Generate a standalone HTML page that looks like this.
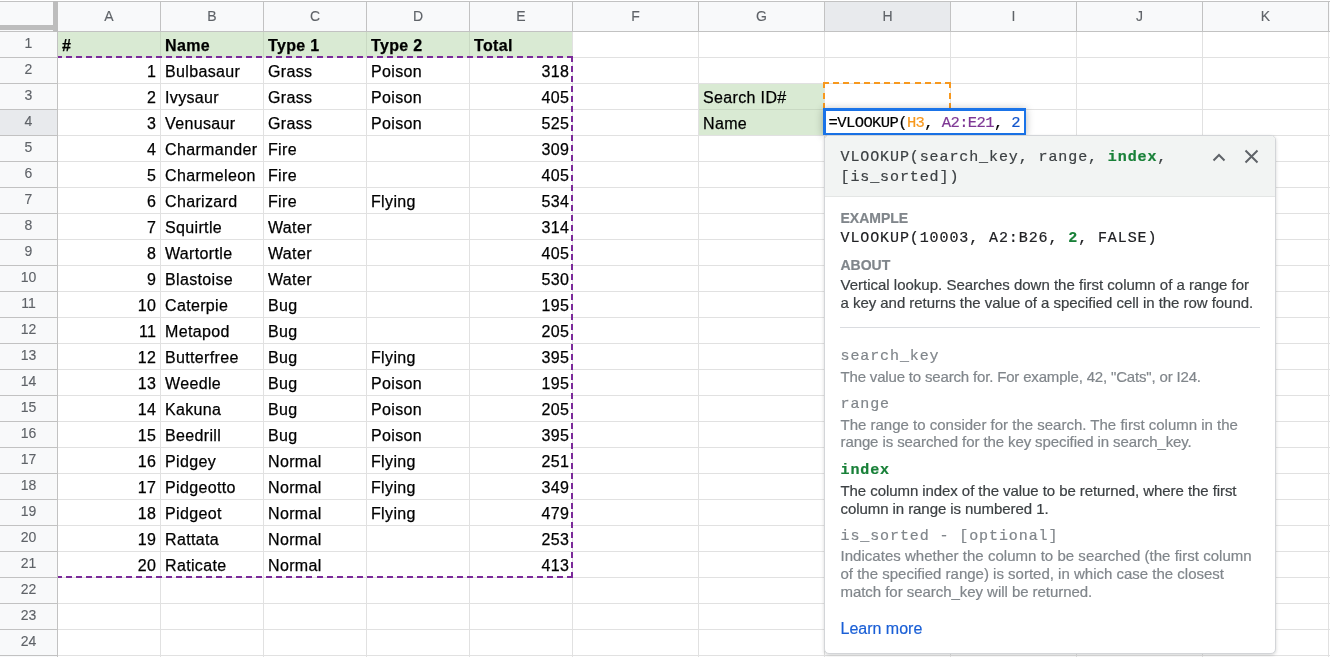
<!DOCTYPE html>
<html><head><meta charset="utf-8"><style>
html,body{margin:0;padding:0;}
body{width:1330px;height:657px;overflow:hidden;position:relative;background:#fff;font-family:'Liberation Sans',sans-serif;}
#g div{position:absolute;}
.t{height:0;line-height:0;white-space:pre;-webkit-text-stroke:0.25px currentColor;}
.b{display:inline-block;height:0;vertical-align:baseline;}
.pop{position:absolute;left:824px;top:135px;width:450px;height:517px;background:#fff;border:1px solid #d3d5d8;border-radius:5px;box-shadow:0 1px 3px rgba(60,64,67,.15),0 2px 5px rgba(60,64,67,.08);overflow:hidden;}
.pop .hd{position:absolute;left:0;top:0;width:450px;height:60px;background:#f2f4f3;border-bottom:1px solid #e4e6e5;}
.pt{position:absolute;height:0;line-height:0;white-space:pre;-webkit-text-stroke:0.2px currentColor;}
#wrap{position:absolute;left:0;top:0;width:1330px;height:657px;will-change:transform;}
.mono{font-family:'Liberation Mono',monospace;}
.sans{font-family:'Liberation Sans',sans-serif;}
</style></head><body><div id="wrap">
<div id="g">
<div style="left:0px;top:2px;width:1330px;height:29px;background:#f8f9fa;"></div>
<div style="left:0px;top:32px;width:57px;height:625px;background:#f8f9fa;"></div>
<div style="left:825px;top:2px;width:125px;height:29px;background:#e8eaed;"></div>
<div style="left:0px;top:110px;width:57px;height:25px;background:#e8eaed;"></div>
<div style="left:58px;top:32px;width:514px;height:25px;background:#d9ead3;"></div>
<div style="left:699px;top:84px;width:125px;height:51px;background:#d9ead3;"></div>
<div style="left:58px;top:57px;width:1272px;height:1px;background:#e1e1e1;"></div>
<div style="left:58px;top:83px;width:1272px;height:1px;background:#e1e1e1;"></div>
<div style="left:58px;top:109px;width:1272px;height:1px;background:#e1e1e1;"></div>
<div style="left:58px;top:135px;width:1272px;height:1px;background:#e1e1e1;"></div>
<div style="left:58px;top:161px;width:1272px;height:1px;background:#e1e1e1;"></div>
<div style="left:58px;top:187px;width:1272px;height:1px;background:#e1e1e1;"></div>
<div style="left:58px;top:213px;width:1272px;height:1px;background:#e1e1e1;"></div>
<div style="left:58px;top:239px;width:1272px;height:1px;background:#e1e1e1;"></div>
<div style="left:58px;top:265px;width:1272px;height:1px;background:#e1e1e1;"></div>
<div style="left:58px;top:291px;width:1272px;height:1px;background:#e1e1e1;"></div>
<div style="left:58px;top:317px;width:1272px;height:1px;background:#e1e1e1;"></div>
<div style="left:58px;top:343px;width:1272px;height:1px;background:#e1e1e1;"></div>
<div style="left:58px;top:369px;width:1272px;height:1px;background:#e1e1e1;"></div>
<div style="left:58px;top:395px;width:1272px;height:1px;background:#e1e1e1;"></div>
<div style="left:58px;top:421px;width:1272px;height:1px;background:#e1e1e1;"></div>
<div style="left:58px;top:447px;width:1272px;height:1px;background:#e1e1e1;"></div>
<div style="left:58px;top:473px;width:1272px;height:1px;background:#e1e1e1;"></div>
<div style="left:58px;top:499px;width:1272px;height:1px;background:#e1e1e1;"></div>
<div style="left:58px;top:525px;width:1272px;height:1px;background:#e1e1e1;"></div>
<div style="left:58px;top:551px;width:1272px;height:1px;background:#e1e1e1;"></div>
<div style="left:58px;top:577px;width:1272px;height:1px;background:#e1e1e1;"></div>
<div style="left:58px;top:603px;width:1272px;height:1px;background:#e1e1e1;"></div>
<div style="left:58px;top:629px;width:1272px;height:1px;background:#e1e1e1;"></div>
<div style="left:58px;top:655px;width:1272px;height:1px;background:#e1e1e1;"></div>
<div style="left:160px;top:32px;width:1px;height:625px;background:#e1e1e1;"></div>
<div style="left:263px;top:32px;width:1px;height:625px;background:#e1e1e1;"></div>
<div style="left:366px;top:32px;width:1px;height:625px;background:#e1e1e1;"></div>
<div style="left:469px;top:32px;width:1px;height:625px;background:#e1e1e1;"></div>
<div style="left:572px;top:32px;width:1px;height:625px;background:#e1e1e1;"></div>
<div style="left:698px;top:32px;width:1px;height:625px;background:#e1e1e1;"></div>
<div style="left:824px;top:32px;width:1px;height:625px;background:#e1e1e1;"></div>
<div style="left:950px;top:32px;width:1px;height:625px;background:#e1e1e1;"></div>
<div style="left:1076px;top:32px;width:1px;height:625px;background:#e1e1e1;"></div>
<div style="left:1202px;top:32px;width:1px;height:625px;background:#e1e1e1;"></div>
<div style="left:1328px;top:32px;width:1px;height:625px;background:#e1e1e1;"></div>
<div style="left:160px;top:32px;width:1px;height:25px;background:#c9d9c3;"></div>
<div style="left:263px;top:32px;width:1px;height:25px;background:#c9d9c3;"></div>
<div style="left:366px;top:32px;width:1px;height:25px;background:#c9d9c3;"></div>
<div style="left:469px;top:32px;width:1px;height:25px;background:#c9d9c3;"></div>
<div style="left:699px;top:109px;width:125px;height:1px;background:#c9d9c3;"></div>
<div style="left:0px;top:1px;width:1330px;height:1px;background:#c2c2c2;"></div>
<div style="left:0px;top:31px;width:1330px;height:1px;background:#c2c2c2;"></div>
<div style="left:57px;top:1px;width:1px;height:656px;background:#c2c2c2;"></div>
<div style="left:160px;top:2px;width:1px;height:29px;background:#c2c2c2;"></div>
<div style="left:263px;top:2px;width:1px;height:29px;background:#c2c2c2;"></div>
<div style="left:366px;top:2px;width:1px;height:29px;background:#c2c2c2;"></div>
<div style="left:469px;top:2px;width:1px;height:29px;background:#c2c2c2;"></div>
<div style="left:572px;top:2px;width:1px;height:29px;background:#c2c2c2;"></div>
<div style="left:698px;top:2px;width:1px;height:29px;background:#c2c2c2;"></div>
<div style="left:824px;top:2px;width:1px;height:29px;background:#c2c2c2;"></div>
<div style="left:950px;top:2px;width:1px;height:29px;background:#c2c2c2;"></div>
<div style="left:1076px;top:2px;width:1px;height:29px;background:#c2c2c2;"></div>
<div style="left:1202px;top:2px;width:1px;height:29px;background:#c2c2c2;"></div>
<div style="left:1328px;top:2px;width:1px;height:29px;background:#c2c2c2;"></div>
<div style="left:0px;top:57px;width:57px;height:1px;background:#c2c2c2;"></div>
<div style="left:0px;top:83px;width:57px;height:1px;background:#c2c2c2;"></div>
<div style="left:0px;top:109px;width:57px;height:1px;background:#c2c2c2;"></div>
<div style="left:0px;top:135px;width:57px;height:1px;background:#c2c2c2;"></div>
<div style="left:0px;top:161px;width:57px;height:1px;background:#c2c2c2;"></div>
<div style="left:0px;top:187px;width:57px;height:1px;background:#c2c2c2;"></div>
<div style="left:0px;top:213px;width:57px;height:1px;background:#c2c2c2;"></div>
<div style="left:0px;top:239px;width:57px;height:1px;background:#c2c2c2;"></div>
<div style="left:0px;top:265px;width:57px;height:1px;background:#c2c2c2;"></div>
<div style="left:0px;top:291px;width:57px;height:1px;background:#c2c2c2;"></div>
<div style="left:0px;top:317px;width:57px;height:1px;background:#c2c2c2;"></div>
<div style="left:0px;top:343px;width:57px;height:1px;background:#c2c2c2;"></div>
<div style="left:0px;top:369px;width:57px;height:1px;background:#c2c2c2;"></div>
<div style="left:0px;top:395px;width:57px;height:1px;background:#c2c2c2;"></div>
<div style="left:0px;top:421px;width:57px;height:1px;background:#c2c2c2;"></div>
<div style="left:0px;top:447px;width:57px;height:1px;background:#c2c2c2;"></div>
<div style="left:0px;top:473px;width:57px;height:1px;background:#c2c2c2;"></div>
<div style="left:0px;top:499px;width:57px;height:1px;background:#c2c2c2;"></div>
<div style="left:0px;top:525px;width:57px;height:1px;background:#c2c2c2;"></div>
<div style="left:0px;top:551px;width:57px;height:1px;background:#c2c2c2;"></div>
<div style="left:0px;top:577px;width:57px;height:1px;background:#c2c2c2;"></div>
<div style="left:0px;top:603px;width:57px;height:1px;background:#c2c2c2;"></div>
<div style="left:0px;top:629px;width:57px;height:1px;background:#c2c2c2;"></div>
<div style="left:0px;top:655px;width:57px;height:1px;background:#c2c2c2;"></div>
<div style="left:53px;top:1px;width:5px;height:31px;background:#bdbdbd;"></div>
<div style="left:0px;top:25px;width:53px;height:5px;background:#bdbdbd;"></div>
<div style="left:0px;top:30px;width:53px;height:1px;background:#f8f9fa;"></div>
<div class="t" style="left:-91.0px;width:400px;text-align:center;top:16.15px;font-family:'Liberation Sans',sans-serif;font-size:14px;color:#5f6368;font-weight:normal;letter-spacing:0px;-webkit-text-stroke:0.12px currentColor;"><span class="b"></span>A</div>
<div class="t" style="left:12.0px;width:400px;text-align:center;top:16.15px;font-family:'Liberation Sans',sans-serif;font-size:14px;color:#5f6368;font-weight:normal;letter-spacing:0px;-webkit-text-stroke:0.12px currentColor;"><span class="b"></span>B</div>
<div class="t" style="left:115.0px;width:400px;text-align:center;top:16.15px;font-family:'Liberation Sans',sans-serif;font-size:14px;color:#5f6368;font-weight:normal;letter-spacing:0px;-webkit-text-stroke:0.12px currentColor;"><span class="b"></span>C</div>
<div class="t" style="left:218.0px;width:400px;text-align:center;top:16.15px;font-family:'Liberation Sans',sans-serif;font-size:14px;color:#5f6368;font-weight:normal;letter-spacing:0px;-webkit-text-stroke:0.12px currentColor;"><span class="b"></span>D</div>
<div class="t" style="left:321.0px;width:400px;text-align:center;top:16.15px;font-family:'Liberation Sans',sans-serif;font-size:14px;color:#5f6368;font-weight:normal;letter-spacing:0px;-webkit-text-stroke:0.12px currentColor;"><span class="b"></span>E</div>
<div class="t" style="left:435.5px;width:400px;text-align:center;top:16.15px;font-family:'Liberation Sans',sans-serif;font-size:14px;color:#5f6368;font-weight:normal;letter-spacing:0px;-webkit-text-stroke:0.12px currentColor;"><span class="b"></span>F</div>
<div class="t" style="left:561.5px;width:400px;text-align:center;top:16.15px;font-family:'Liberation Sans',sans-serif;font-size:14px;color:#5f6368;font-weight:normal;letter-spacing:0px;-webkit-text-stroke:0.12px currentColor;"><span class="b"></span>G</div>
<div class="t" style="left:687.5px;width:400px;text-align:center;top:16.15px;font-family:'Liberation Sans',sans-serif;font-size:14px;color:#5f6368;font-weight:normal;letter-spacing:0px;-webkit-text-stroke:0.12px currentColor;"><span class="b"></span>H</div>
<div class="t" style="left:813.5px;width:400px;text-align:center;top:16.15px;font-family:'Liberation Sans',sans-serif;font-size:14px;color:#5f6368;font-weight:normal;letter-spacing:0px;-webkit-text-stroke:0.12px currentColor;"><span class="b"></span>I</div>
<div class="t" style="left:939.5px;width:400px;text-align:center;top:16.15px;font-family:'Liberation Sans',sans-serif;font-size:14px;color:#5f6368;font-weight:normal;letter-spacing:0px;-webkit-text-stroke:0.12px currentColor;"><span class="b"></span>J</div>
<div class="t" style="left:1065.5px;width:400px;text-align:center;top:16.15px;font-family:'Liberation Sans',sans-serif;font-size:14px;color:#5f6368;font-weight:normal;letter-spacing:0px;-webkit-text-stroke:0.12px currentColor;"><span class="b"></span>K</div>
<div class="t" style="left:-171.5px;width:400px;text-align:center;top:43.25px;font-family:'Liberation Sans',sans-serif;font-size:14px;color:#5f6368;font-weight:normal;letter-spacing:0px;-webkit-text-stroke:0.12px currentColor;"><span class="b"></span>1</div>
<div class="t" style="left:-171.5px;width:400px;text-align:center;top:69.25px;font-family:'Liberation Sans',sans-serif;font-size:14px;color:#5f6368;font-weight:normal;letter-spacing:0px;-webkit-text-stroke:0.12px currentColor;"><span class="b"></span>2</div>
<div class="t" style="left:-171.5px;width:400px;text-align:center;top:95.25px;font-family:'Liberation Sans',sans-serif;font-size:14px;color:#5f6368;font-weight:normal;letter-spacing:0px;-webkit-text-stroke:0.12px currentColor;"><span class="b"></span>3</div>
<div class="t" style="left:-171.5px;width:400px;text-align:center;top:121.25px;font-family:'Liberation Sans',sans-serif;font-size:14px;color:#5f6368;font-weight:normal;letter-spacing:0px;-webkit-text-stroke:0.12px currentColor;"><span class="b"></span>4</div>
<div class="t" style="left:-171.5px;width:400px;text-align:center;top:147.25px;font-family:'Liberation Sans',sans-serif;font-size:14px;color:#5f6368;font-weight:normal;letter-spacing:0px;-webkit-text-stroke:0.12px currentColor;"><span class="b"></span>5</div>
<div class="t" style="left:-171.5px;width:400px;text-align:center;top:173.25px;font-family:'Liberation Sans',sans-serif;font-size:14px;color:#5f6368;font-weight:normal;letter-spacing:0px;-webkit-text-stroke:0.12px currentColor;"><span class="b"></span>6</div>
<div class="t" style="left:-171.5px;width:400px;text-align:center;top:199.25px;font-family:'Liberation Sans',sans-serif;font-size:14px;color:#5f6368;font-weight:normal;letter-spacing:0px;-webkit-text-stroke:0.12px currentColor;"><span class="b"></span>7</div>
<div class="t" style="left:-171.5px;width:400px;text-align:center;top:225.25px;font-family:'Liberation Sans',sans-serif;font-size:14px;color:#5f6368;font-weight:normal;letter-spacing:0px;-webkit-text-stroke:0.12px currentColor;"><span class="b"></span>8</div>
<div class="t" style="left:-171.5px;width:400px;text-align:center;top:251.25px;font-family:'Liberation Sans',sans-serif;font-size:14px;color:#5f6368;font-weight:normal;letter-spacing:0px;-webkit-text-stroke:0.12px currentColor;"><span class="b"></span>9</div>
<div class="t" style="left:-171.5px;width:400px;text-align:center;top:277.25px;font-family:'Liberation Sans',sans-serif;font-size:14px;color:#5f6368;font-weight:normal;letter-spacing:0px;-webkit-text-stroke:0.12px currentColor;"><span class="b"></span>10</div>
<div class="t" style="left:-171.5px;width:400px;text-align:center;top:303.25px;font-family:'Liberation Sans',sans-serif;font-size:14px;color:#5f6368;font-weight:normal;letter-spacing:0px;-webkit-text-stroke:0.12px currentColor;"><span class="b"></span>11</div>
<div class="t" style="left:-171.5px;width:400px;text-align:center;top:329.25px;font-family:'Liberation Sans',sans-serif;font-size:14px;color:#5f6368;font-weight:normal;letter-spacing:0px;-webkit-text-stroke:0.12px currentColor;"><span class="b"></span>12</div>
<div class="t" style="left:-171.5px;width:400px;text-align:center;top:355.25px;font-family:'Liberation Sans',sans-serif;font-size:14px;color:#5f6368;font-weight:normal;letter-spacing:0px;-webkit-text-stroke:0.12px currentColor;"><span class="b"></span>13</div>
<div class="t" style="left:-171.5px;width:400px;text-align:center;top:381.25px;font-family:'Liberation Sans',sans-serif;font-size:14px;color:#5f6368;font-weight:normal;letter-spacing:0px;-webkit-text-stroke:0.12px currentColor;"><span class="b"></span>14</div>
<div class="t" style="left:-171.5px;width:400px;text-align:center;top:407.25px;font-family:'Liberation Sans',sans-serif;font-size:14px;color:#5f6368;font-weight:normal;letter-spacing:0px;-webkit-text-stroke:0.12px currentColor;"><span class="b"></span>15</div>
<div class="t" style="left:-171.5px;width:400px;text-align:center;top:433.25px;font-family:'Liberation Sans',sans-serif;font-size:14px;color:#5f6368;font-weight:normal;letter-spacing:0px;-webkit-text-stroke:0.12px currentColor;"><span class="b"></span>16</div>
<div class="t" style="left:-171.5px;width:400px;text-align:center;top:459.25px;font-family:'Liberation Sans',sans-serif;font-size:14px;color:#5f6368;font-weight:normal;letter-spacing:0px;-webkit-text-stroke:0.12px currentColor;"><span class="b"></span>17</div>
<div class="t" style="left:-171.5px;width:400px;text-align:center;top:485.25px;font-family:'Liberation Sans',sans-serif;font-size:14px;color:#5f6368;font-weight:normal;letter-spacing:0px;-webkit-text-stroke:0.12px currentColor;"><span class="b"></span>18</div>
<div class="t" style="left:-171.5px;width:400px;text-align:center;top:511.25px;font-family:'Liberation Sans',sans-serif;font-size:14px;color:#5f6368;font-weight:normal;letter-spacing:0px;-webkit-text-stroke:0.12px currentColor;"><span class="b"></span>19</div>
<div class="t" style="left:-171.5px;width:400px;text-align:center;top:537.25px;font-family:'Liberation Sans',sans-serif;font-size:14px;color:#5f6368;font-weight:normal;letter-spacing:0px;-webkit-text-stroke:0.12px currentColor;"><span class="b"></span>20</div>
<div class="t" style="left:-171.5px;width:400px;text-align:center;top:563.25px;font-family:'Liberation Sans',sans-serif;font-size:14px;color:#5f6368;font-weight:normal;letter-spacing:0px;-webkit-text-stroke:0.12px currentColor;"><span class="b"></span>21</div>
<div class="t" style="left:-171.5px;width:400px;text-align:center;top:589.25px;font-family:'Liberation Sans',sans-serif;font-size:14px;color:#5f6368;font-weight:normal;letter-spacing:0px;-webkit-text-stroke:0.12px currentColor;"><span class="b"></span>22</div>
<div class="t" style="left:-171.5px;width:400px;text-align:center;top:615.25px;font-family:'Liberation Sans',sans-serif;font-size:14px;color:#5f6368;font-weight:normal;letter-spacing:0px;-webkit-text-stroke:0.12px currentColor;"><span class="b"></span>23</div>
<div class="t" style="left:-171.5px;width:400px;text-align:center;top:641.25px;font-family:'Liberation Sans',sans-serif;font-size:14px;color:#5f6368;font-weight:normal;letter-spacing:0px;-webkit-text-stroke:0.12px currentColor;"><span class="b"></span>24</div>
<div class="t" style="left:62px;top:45.75px;font-family:'Liberation Sans',sans-serif;font-size:16px;color:#000;font-weight:bold;letter-spacing:0.35px;"><span class="b"></span>#</div>
<div class="t" style="left:165px;top:45.75px;font-family:'Liberation Sans',sans-serif;font-size:16px;color:#000;font-weight:bold;letter-spacing:0.35px;"><span class="b"></span>Name</div>
<div class="t" style="left:268px;top:45.75px;font-family:'Liberation Sans',sans-serif;font-size:16px;color:#000;font-weight:bold;letter-spacing:0.35px;"><span class="b"></span>Type 1</div>
<div class="t" style="left:371px;top:45.75px;font-family:'Liberation Sans',sans-serif;font-size:16px;color:#000;font-weight:bold;letter-spacing:0.35px;"><span class="b"></span>Type 2</div>
<div class="t" style="left:474px;top:45.75px;font-family:'Liberation Sans',sans-serif;font-size:16px;color:#000;font-weight:bold;letter-spacing:0.35px;"><span class="b"></span>Total</div>
<div class="t" style="right:1173.65px;top:71.95px;font-family:'Liberation Sans',sans-serif;font-size:16px;color:#000;font-weight:normal;letter-spacing:0.35px;"><span class="b"></span>1</div>
<div class="t" style="left:165px;top:71.95px;font-family:'Liberation Sans',sans-serif;font-size:16px;color:#000;font-weight:normal;letter-spacing:0.35px;"><span class="b"></span>Bulbasaur</div>
<div class="t" style="left:268px;top:71.95px;font-family:'Liberation Sans',sans-serif;font-size:16px;color:#000;font-weight:normal;letter-spacing:0.35px;"><span class="b"></span>Grass</div>
<div class="t" style="left:371px;top:71.95px;font-family:'Liberation Sans',sans-serif;font-size:16px;color:#000;font-weight:normal;letter-spacing:0.35px;"><span class="b"></span>Poison</div>
<div class="t" style="right:760.65px;top:71.95px;font-family:'Liberation Sans',sans-serif;font-size:16px;color:#000;font-weight:normal;letter-spacing:0.35px;"><span class="b"></span>318</div>
<div class="t" style="right:1173.65px;top:97.95px;font-family:'Liberation Sans',sans-serif;font-size:16px;color:#000;font-weight:normal;letter-spacing:0.35px;"><span class="b"></span>2</div>
<div class="t" style="left:165px;top:97.95px;font-family:'Liberation Sans',sans-serif;font-size:16px;color:#000;font-weight:normal;letter-spacing:0.35px;"><span class="b"></span>Ivysaur</div>
<div class="t" style="left:268px;top:97.95px;font-family:'Liberation Sans',sans-serif;font-size:16px;color:#000;font-weight:normal;letter-spacing:0.35px;"><span class="b"></span>Grass</div>
<div class="t" style="left:371px;top:97.95px;font-family:'Liberation Sans',sans-serif;font-size:16px;color:#000;font-weight:normal;letter-spacing:0.35px;"><span class="b"></span>Poison</div>
<div class="t" style="right:760.65px;top:97.95px;font-family:'Liberation Sans',sans-serif;font-size:16px;color:#000;font-weight:normal;letter-spacing:0.35px;"><span class="b"></span>405</div>
<div class="t" style="right:1173.65px;top:123.95px;font-family:'Liberation Sans',sans-serif;font-size:16px;color:#000;font-weight:normal;letter-spacing:0.35px;"><span class="b"></span>3</div>
<div class="t" style="left:165px;top:123.95px;font-family:'Liberation Sans',sans-serif;font-size:16px;color:#000;font-weight:normal;letter-spacing:0.35px;"><span class="b"></span>Venusaur</div>
<div class="t" style="left:268px;top:123.95px;font-family:'Liberation Sans',sans-serif;font-size:16px;color:#000;font-weight:normal;letter-spacing:0.35px;"><span class="b"></span>Grass</div>
<div class="t" style="left:371px;top:123.95px;font-family:'Liberation Sans',sans-serif;font-size:16px;color:#000;font-weight:normal;letter-spacing:0.35px;"><span class="b"></span>Poison</div>
<div class="t" style="right:760.65px;top:123.95px;font-family:'Liberation Sans',sans-serif;font-size:16px;color:#000;font-weight:normal;letter-spacing:0.35px;"><span class="b"></span>525</div>
<div class="t" style="right:1173.65px;top:149.95px;font-family:'Liberation Sans',sans-serif;font-size:16px;color:#000;font-weight:normal;letter-spacing:0.35px;"><span class="b"></span>4</div>
<div class="t" style="left:165px;top:149.95px;font-family:'Liberation Sans',sans-serif;font-size:16px;color:#000;font-weight:normal;letter-spacing:0.35px;"><span class="b"></span>Charmander</div>
<div class="t" style="left:268px;top:149.95px;font-family:'Liberation Sans',sans-serif;font-size:16px;color:#000;font-weight:normal;letter-spacing:0.35px;"><span class="b"></span>Fire</div>
<div class="t" style="right:760.65px;top:149.95px;font-family:'Liberation Sans',sans-serif;font-size:16px;color:#000;font-weight:normal;letter-spacing:0.35px;"><span class="b"></span>309</div>
<div class="t" style="right:1173.65px;top:175.95px;font-family:'Liberation Sans',sans-serif;font-size:16px;color:#000;font-weight:normal;letter-spacing:0.35px;"><span class="b"></span>5</div>
<div class="t" style="left:165px;top:175.95px;font-family:'Liberation Sans',sans-serif;font-size:16px;color:#000;font-weight:normal;letter-spacing:0.35px;"><span class="b"></span>Charmeleon</div>
<div class="t" style="left:268px;top:175.95px;font-family:'Liberation Sans',sans-serif;font-size:16px;color:#000;font-weight:normal;letter-spacing:0.35px;"><span class="b"></span>Fire</div>
<div class="t" style="right:760.65px;top:175.95px;font-family:'Liberation Sans',sans-serif;font-size:16px;color:#000;font-weight:normal;letter-spacing:0.35px;"><span class="b"></span>405</div>
<div class="t" style="right:1173.65px;top:201.95px;font-family:'Liberation Sans',sans-serif;font-size:16px;color:#000;font-weight:normal;letter-spacing:0.35px;"><span class="b"></span>6</div>
<div class="t" style="left:165px;top:201.95px;font-family:'Liberation Sans',sans-serif;font-size:16px;color:#000;font-weight:normal;letter-spacing:0.35px;"><span class="b"></span>Charizard</div>
<div class="t" style="left:268px;top:201.95px;font-family:'Liberation Sans',sans-serif;font-size:16px;color:#000;font-weight:normal;letter-spacing:0.35px;"><span class="b"></span>Fire</div>
<div class="t" style="left:371px;top:201.95px;font-family:'Liberation Sans',sans-serif;font-size:16px;color:#000;font-weight:normal;letter-spacing:0.35px;"><span class="b"></span>Flying</div>
<div class="t" style="right:760.65px;top:201.95px;font-family:'Liberation Sans',sans-serif;font-size:16px;color:#000;font-weight:normal;letter-spacing:0.35px;"><span class="b"></span>534</div>
<div class="t" style="right:1173.65px;top:227.95px;font-family:'Liberation Sans',sans-serif;font-size:16px;color:#000;font-weight:normal;letter-spacing:0.35px;"><span class="b"></span>7</div>
<div class="t" style="left:165px;top:227.95px;font-family:'Liberation Sans',sans-serif;font-size:16px;color:#000;font-weight:normal;letter-spacing:0.35px;"><span class="b"></span>Squirtle</div>
<div class="t" style="left:268px;top:227.95px;font-family:'Liberation Sans',sans-serif;font-size:16px;color:#000;font-weight:normal;letter-spacing:0.35px;"><span class="b"></span>Water</div>
<div class="t" style="right:760.65px;top:227.95px;font-family:'Liberation Sans',sans-serif;font-size:16px;color:#000;font-weight:normal;letter-spacing:0.35px;"><span class="b"></span>314</div>
<div class="t" style="right:1173.65px;top:253.95px;font-family:'Liberation Sans',sans-serif;font-size:16px;color:#000;font-weight:normal;letter-spacing:0.35px;"><span class="b"></span>8</div>
<div class="t" style="left:165px;top:253.95px;font-family:'Liberation Sans',sans-serif;font-size:16px;color:#000;font-weight:normal;letter-spacing:0.35px;"><span class="b"></span>Wartortle</div>
<div class="t" style="left:268px;top:253.95px;font-family:'Liberation Sans',sans-serif;font-size:16px;color:#000;font-weight:normal;letter-spacing:0.35px;"><span class="b"></span>Water</div>
<div class="t" style="right:760.65px;top:253.95px;font-family:'Liberation Sans',sans-serif;font-size:16px;color:#000;font-weight:normal;letter-spacing:0.35px;"><span class="b"></span>405</div>
<div class="t" style="right:1173.65px;top:279.95px;font-family:'Liberation Sans',sans-serif;font-size:16px;color:#000;font-weight:normal;letter-spacing:0.35px;"><span class="b"></span>9</div>
<div class="t" style="left:165px;top:279.95px;font-family:'Liberation Sans',sans-serif;font-size:16px;color:#000;font-weight:normal;letter-spacing:0.35px;"><span class="b"></span>Blastoise</div>
<div class="t" style="left:268px;top:279.95px;font-family:'Liberation Sans',sans-serif;font-size:16px;color:#000;font-weight:normal;letter-spacing:0.35px;"><span class="b"></span>Water</div>
<div class="t" style="right:760.65px;top:279.95px;font-family:'Liberation Sans',sans-serif;font-size:16px;color:#000;font-weight:normal;letter-spacing:0.35px;"><span class="b"></span>530</div>
<div class="t" style="right:1173.65px;top:305.95px;font-family:'Liberation Sans',sans-serif;font-size:16px;color:#000;font-weight:normal;letter-spacing:0.35px;"><span class="b"></span>10</div>
<div class="t" style="left:165px;top:305.95px;font-family:'Liberation Sans',sans-serif;font-size:16px;color:#000;font-weight:normal;letter-spacing:0.35px;"><span class="b"></span>Caterpie</div>
<div class="t" style="left:268px;top:305.95px;font-family:'Liberation Sans',sans-serif;font-size:16px;color:#000;font-weight:normal;letter-spacing:0.35px;"><span class="b"></span>Bug</div>
<div class="t" style="right:760.65px;top:305.95px;font-family:'Liberation Sans',sans-serif;font-size:16px;color:#000;font-weight:normal;letter-spacing:0.35px;"><span class="b"></span>195</div>
<div class="t" style="right:1173.65px;top:331.95px;font-family:'Liberation Sans',sans-serif;font-size:16px;color:#000;font-weight:normal;letter-spacing:0.35px;"><span class="b"></span>11</div>
<div class="t" style="left:165px;top:331.95px;font-family:'Liberation Sans',sans-serif;font-size:16px;color:#000;font-weight:normal;letter-spacing:0.35px;"><span class="b"></span>Metapod</div>
<div class="t" style="left:268px;top:331.95px;font-family:'Liberation Sans',sans-serif;font-size:16px;color:#000;font-weight:normal;letter-spacing:0.35px;"><span class="b"></span>Bug</div>
<div class="t" style="right:760.65px;top:331.95px;font-family:'Liberation Sans',sans-serif;font-size:16px;color:#000;font-weight:normal;letter-spacing:0.35px;"><span class="b"></span>205</div>
<div class="t" style="right:1173.65px;top:357.95px;font-family:'Liberation Sans',sans-serif;font-size:16px;color:#000;font-weight:normal;letter-spacing:0.35px;"><span class="b"></span>12</div>
<div class="t" style="left:165px;top:357.95px;font-family:'Liberation Sans',sans-serif;font-size:16px;color:#000;font-weight:normal;letter-spacing:0.35px;"><span class="b"></span>Butterfree</div>
<div class="t" style="left:268px;top:357.95px;font-family:'Liberation Sans',sans-serif;font-size:16px;color:#000;font-weight:normal;letter-spacing:0.35px;"><span class="b"></span>Bug</div>
<div class="t" style="left:371px;top:357.95px;font-family:'Liberation Sans',sans-serif;font-size:16px;color:#000;font-weight:normal;letter-spacing:0.35px;"><span class="b"></span>Flying</div>
<div class="t" style="right:760.65px;top:357.95px;font-family:'Liberation Sans',sans-serif;font-size:16px;color:#000;font-weight:normal;letter-spacing:0.35px;"><span class="b"></span>395</div>
<div class="t" style="right:1173.65px;top:383.95px;font-family:'Liberation Sans',sans-serif;font-size:16px;color:#000;font-weight:normal;letter-spacing:0.35px;"><span class="b"></span>13</div>
<div class="t" style="left:165px;top:383.95px;font-family:'Liberation Sans',sans-serif;font-size:16px;color:#000;font-weight:normal;letter-spacing:0.35px;"><span class="b"></span>Weedle</div>
<div class="t" style="left:268px;top:383.95px;font-family:'Liberation Sans',sans-serif;font-size:16px;color:#000;font-weight:normal;letter-spacing:0.35px;"><span class="b"></span>Bug</div>
<div class="t" style="left:371px;top:383.95px;font-family:'Liberation Sans',sans-serif;font-size:16px;color:#000;font-weight:normal;letter-spacing:0.35px;"><span class="b"></span>Poison</div>
<div class="t" style="right:760.65px;top:383.95px;font-family:'Liberation Sans',sans-serif;font-size:16px;color:#000;font-weight:normal;letter-spacing:0.35px;"><span class="b"></span>195</div>
<div class="t" style="right:1173.65px;top:409.95px;font-family:'Liberation Sans',sans-serif;font-size:16px;color:#000;font-weight:normal;letter-spacing:0.35px;"><span class="b"></span>14</div>
<div class="t" style="left:165px;top:409.95px;font-family:'Liberation Sans',sans-serif;font-size:16px;color:#000;font-weight:normal;letter-spacing:0.35px;"><span class="b"></span>Kakuna</div>
<div class="t" style="left:268px;top:409.95px;font-family:'Liberation Sans',sans-serif;font-size:16px;color:#000;font-weight:normal;letter-spacing:0.35px;"><span class="b"></span>Bug</div>
<div class="t" style="left:371px;top:409.95px;font-family:'Liberation Sans',sans-serif;font-size:16px;color:#000;font-weight:normal;letter-spacing:0.35px;"><span class="b"></span>Poison</div>
<div class="t" style="right:760.65px;top:409.95px;font-family:'Liberation Sans',sans-serif;font-size:16px;color:#000;font-weight:normal;letter-spacing:0.35px;"><span class="b"></span>205</div>
<div class="t" style="right:1173.65px;top:435.95px;font-family:'Liberation Sans',sans-serif;font-size:16px;color:#000;font-weight:normal;letter-spacing:0.35px;"><span class="b"></span>15</div>
<div class="t" style="left:165px;top:435.95px;font-family:'Liberation Sans',sans-serif;font-size:16px;color:#000;font-weight:normal;letter-spacing:0.35px;"><span class="b"></span>Beedrill</div>
<div class="t" style="left:268px;top:435.95px;font-family:'Liberation Sans',sans-serif;font-size:16px;color:#000;font-weight:normal;letter-spacing:0.35px;"><span class="b"></span>Bug</div>
<div class="t" style="left:371px;top:435.95px;font-family:'Liberation Sans',sans-serif;font-size:16px;color:#000;font-weight:normal;letter-spacing:0.35px;"><span class="b"></span>Poison</div>
<div class="t" style="right:760.65px;top:435.95px;font-family:'Liberation Sans',sans-serif;font-size:16px;color:#000;font-weight:normal;letter-spacing:0.35px;"><span class="b"></span>395</div>
<div class="t" style="right:1173.65px;top:461.95px;font-family:'Liberation Sans',sans-serif;font-size:16px;color:#000;font-weight:normal;letter-spacing:0.35px;"><span class="b"></span>16</div>
<div class="t" style="left:165px;top:461.95px;font-family:'Liberation Sans',sans-serif;font-size:16px;color:#000;font-weight:normal;letter-spacing:0.35px;"><span class="b"></span>Pidgey</div>
<div class="t" style="left:268px;top:461.95px;font-family:'Liberation Sans',sans-serif;font-size:16px;color:#000;font-weight:normal;letter-spacing:0.35px;"><span class="b"></span>Normal</div>
<div class="t" style="left:371px;top:461.95px;font-family:'Liberation Sans',sans-serif;font-size:16px;color:#000;font-weight:normal;letter-spacing:0.35px;"><span class="b"></span>Flying</div>
<div class="t" style="right:760.65px;top:461.95px;font-family:'Liberation Sans',sans-serif;font-size:16px;color:#000;font-weight:normal;letter-spacing:0.35px;"><span class="b"></span>251</div>
<div class="t" style="right:1173.65px;top:487.95px;font-family:'Liberation Sans',sans-serif;font-size:16px;color:#000;font-weight:normal;letter-spacing:0.35px;"><span class="b"></span>17</div>
<div class="t" style="left:165px;top:487.95px;font-family:'Liberation Sans',sans-serif;font-size:16px;color:#000;font-weight:normal;letter-spacing:0.35px;"><span class="b"></span>Pidgeotto</div>
<div class="t" style="left:268px;top:487.95px;font-family:'Liberation Sans',sans-serif;font-size:16px;color:#000;font-weight:normal;letter-spacing:0.35px;"><span class="b"></span>Normal</div>
<div class="t" style="left:371px;top:487.95px;font-family:'Liberation Sans',sans-serif;font-size:16px;color:#000;font-weight:normal;letter-spacing:0.35px;"><span class="b"></span>Flying</div>
<div class="t" style="right:760.65px;top:487.95px;font-family:'Liberation Sans',sans-serif;font-size:16px;color:#000;font-weight:normal;letter-spacing:0.35px;"><span class="b"></span>349</div>
<div class="t" style="right:1173.65px;top:513.95px;font-family:'Liberation Sans',sans-serif;font-size:16px;color:#000;font-weight:normal;letter-spacing:0.35px;"><span class="b"></span>18</div>
<div class="t" style="left:165px;top:513.95px;font-family:'Liberation Sans',sans-serif;font-size:16px;color:#000;font-weight:normal;letter-spacing:0.35px;"><span class="b"></span>Pidgeot</div>
<div class="t" style="left:268px;top:513.95px;font-family:'Liberation Sans',sans-serif;font-size:16px;color:#000;font-weight:normal;letter-spacing:0.35px;"><span class="b"></span>Normal</div>
<div class="t" style="left:371px;top:513.95px;font-family:'Liberation Sans',sans-serif;font-size:16px;color:#000;font-weight:normal;letter-spacing:0.35px;"><span class="b"></span>Flying</div>
<div class="t" style="right:760.65px;top:513.95px;font-family:'Liberation Sans',sans-serif;font-size:16px;color:#000;font-weight:normal;letter-spacing:0.35px;"><span class="b"></span>479</div>
<div class="t" style="right:1173.65px;top:539.95px;font-family:'Liberation Sans',sans-serif;font-size:16px;color:#000;font-weight:normal;letter-spacing:0.35px;"><span class="b"></span>19</div>
<div class="t" style="left:165px;top:539.95px;font-family:'Liberation Sans',sans-serif;font-size:16px;color:#000;font-weight:normal;letter-spacing:0.35px;"><span class="b"></span>Rattata</div>
<div class="t" style="left:268px;top:539.95px;font-family:'Liberation Sans',sans-serif;font-size:16px;color:#000;font-weight:normal;letter-spacing:0.35px;"><span class="b"></span>Normal</div>
<div class="t" style="right:760.65px;top:539.95px;font-family:'Liberation Sans',sans-serif;font-size:16px;color:#000;font-weight:normal;letter-spacing:0.35px;"><span class="b"></span>253</div>
<div class="t" style="right:1173.65px;top:565.95px;font-family:'Liberation Sans',sans-serif;font-size:16px;color:#000;font-weight:normal;letter-spacing:0.35px;"><span class="b"></span>20</div>
<div class="t" style="left:165px;top:565.95px;font-family:'Liberation Sans',sans-serif;font-size:16px;color:#000;font-weight:normal;letter-spacing:0.35px;"><span class="b"></span>Raticate</div>
<div class="t" style="left:268px;top:565.95px;font-family:'Liberation Sans',sans-serif;font-size:16px;color:#000;font-weight:normal;letter-spacing:0.35px;"><span class="b"></span>Normal</div>
<div class="t" style="right:760.65px;top:565.95px;font-family:'Liberation Sans',sans-serif;font-size:16px;color:#000;font-weight:normal;letter-spacing:0.35px;"><span class="b"></span>413</div>
<div class="t" style="left:703px;top:97.95px;font-family:'Liberation Sans',sans-serif;font-size:16px;color:#000;font-weight:normal;letter-spacing:0.35px;"><span class="b"></span>Search ID#</div>
<div class="t" style="left:703px;top:123.95px;font-family:'Liberation Sans',sans-serif;font-size:16px;color:#000;font-weight:normal;letter-spacing:0.35px;"><span class="b"></span>Name</div>
</div>
<svg style="position:absolute;left:0;top:0" width="1330" height="657" shape-rendering="crispEdges"><clipPath id="cp"><rect x="58" y="0" width="1300" height="657"/></clipPath><g clip-path="url(#cp)"><rect x="56.00" y="56" width="6" height="2" fill="#7b2a9a"/><rect x="66.02" y="56" width="6" height="2" fill="#7b2a9a"/><rect x="76.04" y="56" width="6" height="2" fill="#7b2a9a"/><rect x="86.06" y="56" width="6" height="2" fill="#7b2a9a"/><rect x="96.08" y="56" width="6" height="2" fill="#7b2a9a"/><rect x="106.10" y="56" width="6" height="2" fill="#7b2a9a"/><rect x="116.12" y="56" width="6" height="2" fill="#7b2a9a"/><rect x="126.14" y="56" width="6" height="2" fill="#7b2a9a"/><rect x="136.16" y="56" width="6" height="2" fill="#7b2a9a"/><rect x="146.18" y="56" width="6" height="2" fill="#7b2a9a"/><rect x="156.20" y="56" width="6" height="2" fill="#7b2a9a"/><rect x="166.22" y="56" width="6" height="2" fill="#7b2a9a"/><rect x="176.24" y="56" width="6" height="2" fill="#7b2a9a"/><rect x="186.25" y="56" width="6" height="2" fill="#7b2a9a"/><rect x="196.27" y="56" width="6" height="2" fill="#7b2a9a"/><rect x="206.29" y="56" width="6" height="2" fill="#7b2a9a"/><rect x="216.31" y="56" width="6" height="2" fill="#7b2a9a"/><rect x="226.33" y="56" width="6" height="2" fill="#7b2a9a"/><rect x="236.35" y="56" width="6" height="2" fill="#7b2a9a"/><rect x="246.37" y="56" width="6" height="2" fill="#7b2a9a"/><rect x="256.39" y="56" width="6" height="2" fill="#7b2a9a"/><rect x="266.41" y="56" width="6" height="2" fill="#7b2a9a"/><rect x="276.43" y="56" width="6" height="2" fill="#7b2a9a"/><rect x="286.45" y="56" width="6" height="2" fill="#7b2a9a"/><rect x="296.47" y="56" width="6" height="2" fill="#7b2a9a"/><rect x="306.49" y="56" width="6" height="2" fill="#7b2a9a"/><rect x="316.51" y="56" width="6" height="2" fill="#7b2a9a"/><rect x="326.53" y="56" width="6" height="2" fill="#7b2a9a"/><rect x="336.55" y="56" width="6" height="2" fill="#7b2a9a"/><rect x="346.57" y="56" width="6" height="2" fill="#7b2a9a"/><rect x="356.59" y="56" width="6" height="2" fill="#7b2a9a"/><rect x="366.61" y="56" width="6" height="2" fill="#7b2a9a"/><rect x="376.63" y="56" width="6" height="2" fill="#7b2a9a"/><rect x="386.65" y="56" width="6" height="2" fill="#7b2a9a"/><rect x="396.67" y="56" width="6" height="2" fill="#7b2a9a"/><rect x="406.69" y="56" width="6" height="2" fill="#7b2a9a"/><rect x="416.71" y="56" width="6" height="2" fill="#7b2a9a"/><rect x="426.73" y="56" width="6" height="2" fill="#7b2a9a"/><rect x="436.75" y="56" width="6" height="2" fill="#7b2a9a"/><rect x="446.76" y="56" width="6" height="2" fill="#7b2a9a"/><rect x="456.78" y="56" width="6" height="2" fill="#7b2a9a"/><rect x="466.80" y="56" width="6" height="2" fill="#7b2a9a"/><rect x="476.82" y="56" width="6" height="2" fill="#7b2a9a"/><rect x="486.84" y="56" width="6" height="2" fill="#7b2a9a"/><rect x="496.86" y="56" width="6" height="2" fill="#7b2a9a"/><rect x="506.88" y="56" width="6" height="2" fill="#7b2a9a"/><rect x="516.90" y="56" width="6" height="2" fill="#7b2a9a"/><rect x="526.92" y="56" width="6" height="2" fill="#7b2a9a"/><rect x="536.94" y="56" width="6" height="2" fill="#7b2a9a"/><rect x="546.96" y="56" width="6" height="2" fill="#7b2a9a"/><rect x="556.98" y="56" width="6" height="2" fill="#7b2a9a"/><rect x="567.00" y="56" width="6" height="2" fill="#7b2a9a"/><rect x="56.00" y="576" width="6" height="2" fill="#7b2a9a"/><rect x="66.02" y="576" width="6" height="2" fill="#7b2a9a"/><rect x="76.04" y="576" width="6" height="2" fill="#7b2a9a"/><rect x="86.06" y="576" width="6" height="2" fill="#7b2a9a"/><rect x="96.08" y="576" width="6" height="2" fill="#7b2a9a"/><rect x="106.10" y="576" width="6" height="2" fill="#7b2a9a"/><rect x="116.12" y="576" width="6" height="2" fill="#7b2a9a"/><rect x="126.14" y="576" width="6" height="2" fill="#7b2a9a"/><rect x="136.16" y="576" width="6" height="2" fill="#7b2a9a"/><rect x="146.18" y="576" width="6" height="2" fill="#7b2a9a"/><rect x="156.20" y="576" width="6" height="2" fill="#7b2a9a"/><rect x="166.22" y="576" width="6" height="2" fill="#7b2a9a"/><rect x="176.24" y="576" width="6" height="2" fill="#7b2a9a"/><rect x="186.25" y="576" width="6" height="2" fill="#7b2a9a"/><rect x="196.27" y="576" width="6" height="2" fill="#7b2a9a"/><rect x="206.29" y="576" width="6" height="2" fill="#7b2a9a"/><rect x="216.31" y="576" width="6" height="2" fill="#7b2a9a"/><rect x="226.33" y="576" width="6" height="2" fill="#7b2a9a"/><rect x="236.35" y="576" width="6" height="2" fill="#7b2a9a"/><rect x="246.37" y="576" width="6" height="2" fill="#7b2a9a"/><rect x="256.39" y="576" width="6" height="2" fill="#7b2a9a"/><rect x="266.41" y="576" width="6" height="2" fill="#7b2a9a"/><rect x="276.43" y="576" width="6" height="2" fill="#7b2a9a"/><rect x="286.45" y="576" width="6" height="2" fill="#7b2a9a"/><rect x="296.47" y="576" width="6" height="2" fill="#7b2a9a"/><rect x="306.49" y="576" width="6" height="2" fill="#7b2a9a"/><rect x="316.51" y="576" width="6" height="2" fill="#7b2a9a"/><rect x="326.53" y="576" width="6" height="2" fill="#7b2a9a"/><rect x="336.55" y="576" width="6" height="2" fill="#7b2a9a"/><rect x="346.57" y="576" width="6" height="2" fill="#7b2a9a"/><rect x="356.59" y="576" width="6" height="2" fill="#7b2a9a"/><rect x="366.61" y="576" width="6" height="2" fill="#7b2a9a"/><rect x="376.63" y="576" width="6" height="2" fill="#7b2a9a"/><rect x="386.65" y="576" width="6" height="2" fill="#7b2a9a"/><rect x="396.67" y="576" width="6" height="2" fill="#7b2a9a"/><rect x="406.69" y="576" width="6" height="2" fill="#7b2a9a"/><rect x="416.71" y="576" width="6" height="2" fill="#7b2a9a"/><rect x="426.73" y="576" width="6" height="2" fill="#7b2a9a"/><rect x="436.75" y="576" width="6" height="2" fill="#7b2a9a"/><rect x="446.76" y="576" width="6" height="2" fill="#7b2a9a"/><rect x="456.78" y="576" width="6" height="2" fill="#7b2a9a"/><rect x="466.80" y="576" width="6" height="2" fill="#7b2a9a"/><rect x="476.82" y="576" width="6" height="2" fill="#7b2a9a"/><rect x="486.84" y="576" width="6" height="2" fill="#7b2a9a"/><rect x="496.86" y="576" width="6" height="2" fill="#7b2a9a"/><rect x="506.88" y="576" width="6" height="2" fill="#7b2a9a"/><rect x="516.90" y="576" width="6" height="2" fill="#7b2a9a"/><rect x="526.92" y="576" width="6" height="2" fill="#7b2a9a"/><rect x="536.94" y="576" width="6" height="2" fill="#7b2a9a"/><rect x="546.96" y="576" width="6" height="2" fill="#7b2a9a"/><rect x="556.98" y="576" width="6" height="2" fill="#7b2a9a"/><rect x="567.00" y="576" width="6" height="2" fill="#7b2a9a"/><rect x="571" y="56.00" width="2" height="6" fill="#7b2a9a"/><rect x="571" y="65.92" width="2" height="6" fill="#7b2a9a"/><rect x="571" y="75.85" width="2" height="6" fill="#7b2a9a"/><rect x="571" y="85.77" width="2" height="6" fill="#7b2a9a"/><rect x="571" y="95.69" width="2" height="6" fill="#7b2a9a"/><rect x="571" y="105.62" width="2" height="6" fill="#7b2a9a"/><rect x="571" y="115.54" width="2" height="6" fill="#7b2a9a"/><rect x="571" y="125.46" width="2" height="6" fill="#7b2a9a"/><rect x="571" y="135.38" width="2" height="6" fill="#7b2a9a"/><rect x="571" y="145.31" width="2" height="6" fill="#7b2a9a"/><rect x="571" y="155.23" width="2" height="6" fill="#7b2a9a"/><rect x="571" y="165.15" width="2" height="6" fill="#7b2a9a"/><rect x="571" y="175.08" width="2" height="6" fill="#7b2a9a"/><rect x="571" y="185.00" width="2" height="6" fill="#7b2a9a"/><rect x="571" y="194.92" width="2" height="6" fill="#7b2a9a"/><rect x="571" y="204.85" width="2" height="6" fill="#7b2a9a"/><rect x="571" y="214.77" width="2" height="6" fill="#7b2a9a"/><rect x="571" y="224.69" width="2" height="6" fill="#7b2a9a"/><rect x="571" y="234.62" width="2" height="6" fill="#7b2a9a"/><rect x="571" y="244.54" width="2" height="6" fill="#7b2a9a"/><rect x="571" y="254.46" width="2" height="6" fill="#7b2a9a"/><rect x="571" y="264.38" width="2" height="6" fill="#7b2a9a"/><rect x="571" y="274.31" width="2" height="6" fill="#7b2a9a"/><rect x="571" y="284.23" width="2" height="6" fill="#7b2a9a"/><rect x="571" y="294.15" width="2" height="6" fill="#7b2a9a"/><rect x="571" y="304.08" width="2" height="6" fill="#7b2a9a"/><rect x="571" y="314.00" width="2" height="6" fill="#7b2a9a"/><rect x="571" y="323.92" width="2" height="6" fill="#7b2a9a"/><rect x="571" y="333.85" width="2" height="6" fill="#7b2a9a"/><rect x="571" y="343.77" width="2" height="6" fill="#7b2a9a"/><rect x="571" y="353.69" width="2" height="6" fill="#7b2a9a"/><rect x="571" y="363.62" width="2" height="6" fill="#7b2a9a"/><rect x="571" y="373.54" width="2" height="6" fill="#7b2a9a"/><rect x="571" y="383.46" width="2" height="6" fill="#7b2a9a"/><rect x="571" y="393.38" width="2" height="6" fill="#7b2a9a"/><rect x="571" y="403.31" width="2" height="6" fill="#7b2a9a"/><rect x="571" y="413.23" width="2" height="6" fill="#7b2a9a"/><rect x="571" y="423.15" width="2" height="6" fill="#7b2a9a"/><rect x="571" y="433.08" width="2" height="6" fill="#7b2a9a"/><rect x="571" y="443.00" width="2" height="6" fill="#7b2a9a"/><rect x="571" y="452.92" width="2" height="6" fill="#7b2a9a"/><rect x="571" y="462.85" width="2" height="6" fill="#7b2a9a"/><rect x="571" y="472.77" width="2" height="6" fill="#7b2a9a"/><rect x="571" y="482.69" width="2" height="6" fill="#7b2a9a"/><rect x="571" y="492.62" width="2" height="6" fill="#7b2a9a"/><rect x="571" y="502.54" width="2" height="6" fill="#7b2a9a"/><rect x="571" y="512.46" width="2" height="6" fill="#7b2a9a"/><rect x="571" y="522.38" width="2" height="6" fill="#7b2a9a"/><rect x="571" y="532.31" width="2" height="6" fill="#7b2a9a"/><rect x="571" y="542.23" width="2" height="6" fill="#7b2a9a"/><rect x="571" y="552.15" width="2" height="6" fill="#7b2a9a"/><rect x="571" y="562.08" width="2" height="6" fill="#7b2a9a"/><rect x="571" y="572.00" width="2" height="6" fill="#7b2a9a"/></g><rect x="823.00" y="82" width="6" height="2" fill="#f7981d"/><rect x="833.17" y="82" width="6" height="2" fill="#f7981d"/><rect x="843.33" y="82" width="6" height="2" fill="#f7981d"/><rect x="853.50" y="82" width="6" height="2" fill="#f7981d"/><rect x="863.67" y="82" width="6" height="2" fill="#f7981d"/><rect x="873.83" y="82" width="6" height="2" fill="#f7981d"/><rect x="884.00" y="82" width="6" height="2" fill="#f7981d"/><rect x="894.17" y="82" width="6" height="2" fill="#f7981d"/><rect x="904.33" y="82" width="6" height="2" fill="#f7981d"/><rect x="914.50" y="82" width="6" height="2" fill="#f7981d"/><rect x="924.67" y="82" width="6" height="2" fill="#f7981d"/><rect x="934.83" y="82" width="6" height="2" fill="#f7981d"/><rect x="945.00" y="82" width="6" height="2" fill="#f7981d"/><rect x="823" y="82.00" width="2" height="6" fill="#f7981d"/><rect x="823" y="92.50" width="2" height="6" fill="#f7981d"/><rect x="823" y="103.00" width="2" height="6" fill="#f7981d"/><rect x="949" y="82.00" width="2" height="6" fill="#f7981d"/><rect x="949" y="92.50" width="2" height="6" fill="#f7981d"/><rect x="949" y="103.00" width="2" height="6" fill="#f7981d"/></svg>
<div style="position:absolute;left:823px;top:108px;width:198px;height:22px;border-style:solid;border-color:#1a73e8;border-width:3px 2px 2px 3px;background:#fff;box-shadow:0 1px 8px rgba(0,0,0,.28);"></div>
<div class="pt mono" style="left:828.6px;top:122.68px;font-size:15.5px;letter-spacing:-0.6px;color:#000;">=VLOOKUP(<span style="color:#f7981d">H3</span>, <span style="color:#7e3794">A2:E21</span>, <span style="color:#1155cc">2</span></div>
<div class="pop">
<div class="hd"></div>
<svg style="position:absolute;left:0;top:0" width="450" height="70">
<path d="M388.5 24.5 L394 19 L399.5 24.5" fill="none" stroke="#5f6368" stroke-width="2"/>
<path d="M420.5 14.5 L432.5 26.5 M432.5 14.5 L420.5 26.5" fill="none" stroke="#5f6368" stroke-width="2"/>
</svg>
<div style="position:absolute;left:15px;top:191px;width:420px;height:1px;background:#dadce0"></div>
</div>
<div class="pt mono" style="left:840.5px;top:157.71px;font-size:15px;color:#3c4043;font-weight:normal;letter-spacing:0.9px"><span class="b"></span>VLOOKUP(search_key, range, <b style="color:#188038">index</b>,</div>
<div class="pt mono" style="left:840.5px;top:177.71px;font-size:15px;color:#3c4043;font-weight:normal;letter-spacing:0.9px"><span class="b"></span>[is_sorted])</div>
<div class="pt sans" style="left:840.5px;top:218.15px;font-size:14px;color:#80868b;font-weight:bold;letter-spacing:0px"><span class="b"></span>EXAMPLE</div>
<div class="pt mono" style="left:840.5px;top:238.71px;font-size:15px;color:#202124;font-weight:normal;letter-spacing:0.9px"><span class="b"></span>VLOOKUP(10003, A2:B26, <b style="color:#188038">2</b>, FALSE)</div>
<div class="pt sans" style="left:840.5px;top:265.15px;font-size:14px;color:#80868b;font-weight:bold;letter-spacing:0px"><span class="b"></span>ABOUT</div>
<div class="pt sans" style="left:840.5px;top:284.80px;font-size:15px;color:#3c4043;font-weight:normal;letter-spacing:0px"><span class="b"></span>Vertical lookup. Searches down the first column of a range for</div>
<div class="pt sans" style="left:840.5px;top:302.80px;font-size:15px;color:#3c4043;font-weight:normal;letter-spacing:-0.04px"><span class="b"></span>a key and returns the value of a specified cell in the row found.</div>
<div class="pt mono" style="left:840.5px;top:357.21px;font-size:15px;color:#80868b;font-weight:normal;letter-spacing:0.9px"><span class="b"></span>search_key</div>
<div class="pt sans" style="left:840.5px;top:376.80px;font-size:15px;color:#80868b;font-weight:normal;letter-spacing:-0.17px"><span class="b"></span>The value to search for. For example, 42, "Cats", or I24.</div>
<div class="pt mono" style="left:840.5px;top:405.21px;font-size:15px;color:#80868b;font-weight:normal;letter-spacing:0.9px"><span class="b"></span>range</div>
<div class="pt sans" style="left:840.5px;top:424.80px;font-size:15px;color:#80868b;font-weight:normal;letter-spacing:0px"><span class="b"></span>The range to consider for the search. The first column in the</div>
<div class="pt sans" style="left:840.5px;top:442.30px;font-size:15px;color:#80868b;font-weight:normal;letter-spacing:-0.1px"><span class="b"></span>range is searched for the key specified in search_key.</div>
<div class="pt mono" style="left:840.5px;top:470.71px;font-size:15px;color:#188038;font-weight:normal;letter-spacing:0.9px"><span class="b"></span><b>index</b></div>
<div class="pt sans" style="left:840.5px;top:490.80px;font-size:15px;color:#3c4043;font-weight:normal;letter-spacing:-0.07px"><span class="b"></span>The column index of the value to be returned, where the first</div>
<div class="pt sans" style="left:840.5px;top:508.80px;font-size:15px;color:#3c4043;font-weight:normal;letter-spacing:-0.07px"><span class="b"></span>column in range is numbered 1.</div>
<div class="pt mono" style="left:840.5px;top:536.71px;font-size:15px;color:#80868b;font-weight:normal;letter-spacing:0.9px"><span class="b"></span>is_sorted - [optional]</div>
<div class="pt sans" style="left:840.5px;top:556.30px;font-size:15px;color:#80868b;font-weight:normal;letter-spacing:0.03px"><span class="b"></span>Indicates whether the column to be searched (the first column</div>
<div class="pt sans" style="left:840.5px;top:574.30px;font-size:15px;color:#80868b;font-weight:normal;letter-spacing:0px"><span class="b"></span>of the specified range) is sorted, in which case the closest</div>
<div class="pt sans" style="left:840.5px;top:591.80px;font-size:15px;color:#80868b;font-weight:normal;letter-spacing:-0.045px"><span class="b"></span>match for search_key will be returned.</div>
<div class="pt sans" style="left:840.5px;top:629.45px;font-size:16px;color:#1a5fd6;font-weight:normal;letter-spacing:0px"><span class="b"></span>Learn more</div>

</div></body></html>
